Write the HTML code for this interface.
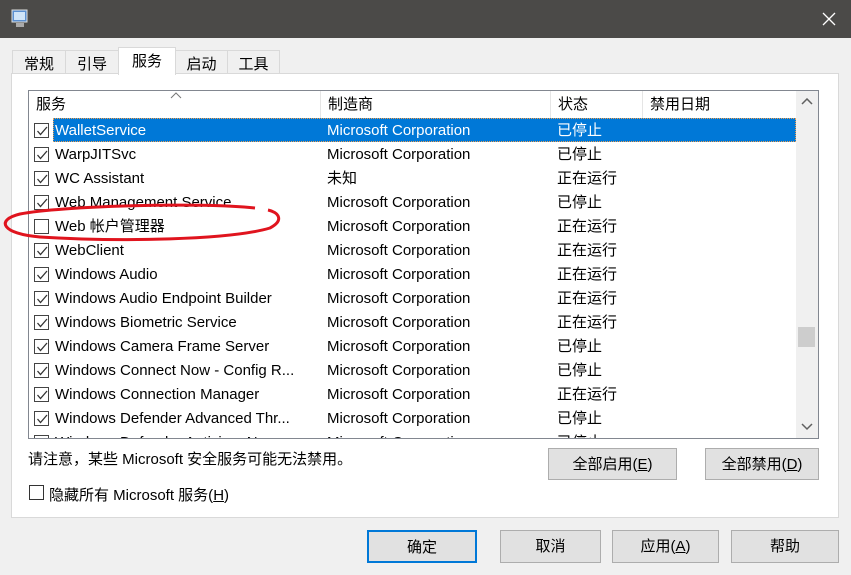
<!DOCTYPE html>
<html><head><meta charset="utf-8"><style>
*{box-sizing:border-box;margin:0;padding:0}
body{width:851px;height:575px;background:#f0f0f0;font-family:"Liberation Sans","Noto Sans CJK SC",sans-serif;font-size:15px;color:#000;position:relative;overflow:hidden}
.abs{position:absolute}
.title{left:0;top:0;width:851px;height:38px;background:#4b4a48}
.tab{position:absolute;top:50px;height:24px;border:1px solid #d9d9d9;border-bottom:none;background:#f0f0f0;text-align:center;line-height:27px;font-size:15px}
.panel{left:11px;top:73px;width:828px;height:445px;background:#fff;border:1px solid #d9d9d9}
.list{left:28px;top:90px;width:791px;height:349px;border:1px solid #828790;background:#fff;overflow:hidden}
.hdr{position:absolute;top:0;height:27px;line-height:27px;border-right:1px solid #e5e5e5}
.row{position:absolute;left:0;width:767px;height:24px;line-height:26px;white-space:nowrap}
.row span{position:absolute}
.cb{position:absolute;left:5px;top:5px;width:15px;height:15px;border:1px solid #444;background:#fff}
.cb svg{position:absolute;left:1px;top:1px}
.sel{background:#0078d7;color:#fff;outline:1px dotted #f0a050;outline-offset:-1px}
.btn{position:absolute;border:1px solid #adadad;background:#e1e1e1;text-align:center}
</style></head><body>
<div class="abs title">
<svg class="abs" style="left:11px;top:9px" width="18" height="20"><rect x="1" y="1" width="15" height="12" fill="#5a8fd0" stroke="#ddd"/><rect x="3" y="3" width="11" height="8" fill="#cfe4f8"/><rect x="5" y="14" width="8" height="4" fill="#aaa"/></svg>
<svg class="abs" style="left:822px;top:12px" width="14" height="14"><path d="M1 1L13 13M13 1L1 13" stroke="#fff" stroke-width="1.3"/></svg>
</div>
<div class="tab" style="left:12px;width:54px">常规</div>
<div class="tab" style="left:65px;width:54px">引导</div>
<div class="tab" style="left:175px;width:53px">启动</div>
<div class="tab" style="left:227px;width:53px">工具</div>
<div class="abs panel"></div>
<div class="tab" style="left:118px;top:47px;width:58px;height:28px;background:#fff;z-index:2;line-height:28px">服务</div>
<div class="abs list">
<div class="hdr" style="left:0;width:292px;padding-left:7px">服务</div>
<svg class="abs" style="left:141px;top:1px" width="12" height="7"><path d="M1 6L6 1L11 6" stroke="#777" fill="none"/></svg>
<div class="hdr" style="left:292px;width:230px;padding-left:7px">制造商</div>
<div class="hdr" style="left:522px;width:92px;padding-left:7px">状态</div>
<div class="hdr" style="left:614px;width:154px;padding-left:7px">禁用日期</div>
<div class="abs" style="left:767px;top:0;width:22px;height:347px;background:#f0f0f0">
<svg class="abs" style="left:5px;top:7px" width="12" height="8"><path d="M1 6L6 1L11 6" stroke="#606060" stroke-width="1.5" fill="none"/></svg>
<div class="abs" style="left:2px;top:236px;width:17px;height:20px;background:#cdcdcd"></div>
<svg class="abs" style="left:5px;top:332px" width="12" height="8"><path d="M1 1L6 6L11 1" stroke="#606060" stroke-width="1.5" fill="none"/></svg>
</div>
<div id="rows"></div>
</div>
<svg class="abs" style="left:0;top:200px" width="290" height="45"><path d="M255 8C200 2 60 6 20 14C-5 20 2 34 40 37C120 42 230 40 270 28C285 20 278 12 268 10" stroke="#e0141e" stroke-width="3" fill="none"/></svg>
<div class="abs" style="left:28px;top:448px">请注意，某些 Microsoft 安全服务可能无法禁用。</div>
<div class="btn" style="left:548px;top:448px;width:129px;height:32px;line-height:32px">全部启用(<u>E</u>)</div>
<div class="btn" style="left:705px;top:448px;width:114px;height:32px;line-height:32px">全部禁用(<u>D</u>)</div>
<div class="abs" style="left:29px;top:485px;width:15px;height:15px;border:1px solid #333;background:#fff"></div>
<div class="abs" style="left:49px;top:484px">隐藏所有 Microsoft 服务(<u>H</u>)</div>
<div class="btn" style="left:367px;top:530px;width:110px;height:33px;line-height:31px;border:2px solid #0078d7">确定</div>
<div class="btn" style="left:500px;top:530px;width:101px;height:33px;line-height:31px">取消</div>
<div class="btn" style="left:612px;top:530px;width:107px;height:33px;line-height:31px">应用(<u>A</u>)</div>
<div class="btn" style="left:731px;top:530px;width:108px;height:33px;line-height:31px">帮助</div>
<script>
var d=[["WalletService","Microsoft Corporation","已停止",1],["WarpJITSvc","Microsoft Corporation","已停止",1],["WC Assistant","未知","正在运行",1],["Web Management Service","Microsoft Corporation","已停止",1],["Web 帐户管理器","Microsoft Corporation","正在运行",0],["WebClient","Microsoft Corporation","正在运行",1],["Windows Audio","Microsoft Corporation","正在运行",1],["Windows Audio Endpoint Builder","Microsoft Corporation","正在运行",1],["Windows Biometric Service","Microsoft Corporation","正在运行",1],["Windows Camera Frame Server","Microsoft Corporation","已停止",1],["Windows Connect Now - Config R...","Microsoft Corporation","已停止",1],["Windows Connection Manager","Microsoft Corporation","正在运行",1],["Windows Defender Advanced Thr...","Microsoft Corporation","已停止",1],["Windows Defender Antivirus Ne...","Microsoft Corporation","已停止",1]];
var h="";d.forEach(function(r,i){h+='<div class="row" style="top:'+(27+i*24)+'px"><div class="cb">'+(r[3]?'<svg width="12" height="12"><path d="M1.5 6L4.5 9.5L11 2" stroke="#333" stroke-width="1.3" fill="none"/></svg>':'')+'</div><span class="'+(i==0?'sel':'')+'" style="left:24px;width:743px;height:24px;padding-left:2px">'+r[0]+'</span><span style="left:298px;'+(i==0?'color:#fff':'')+'">'+r[1]+'</span><span style="left:528px;'+(i==0?'color:#fff':'')+'">'+r[2]+'</span></div>'});
document.getElementById("rows").innerHTML=h;
</script>
</body></html>
